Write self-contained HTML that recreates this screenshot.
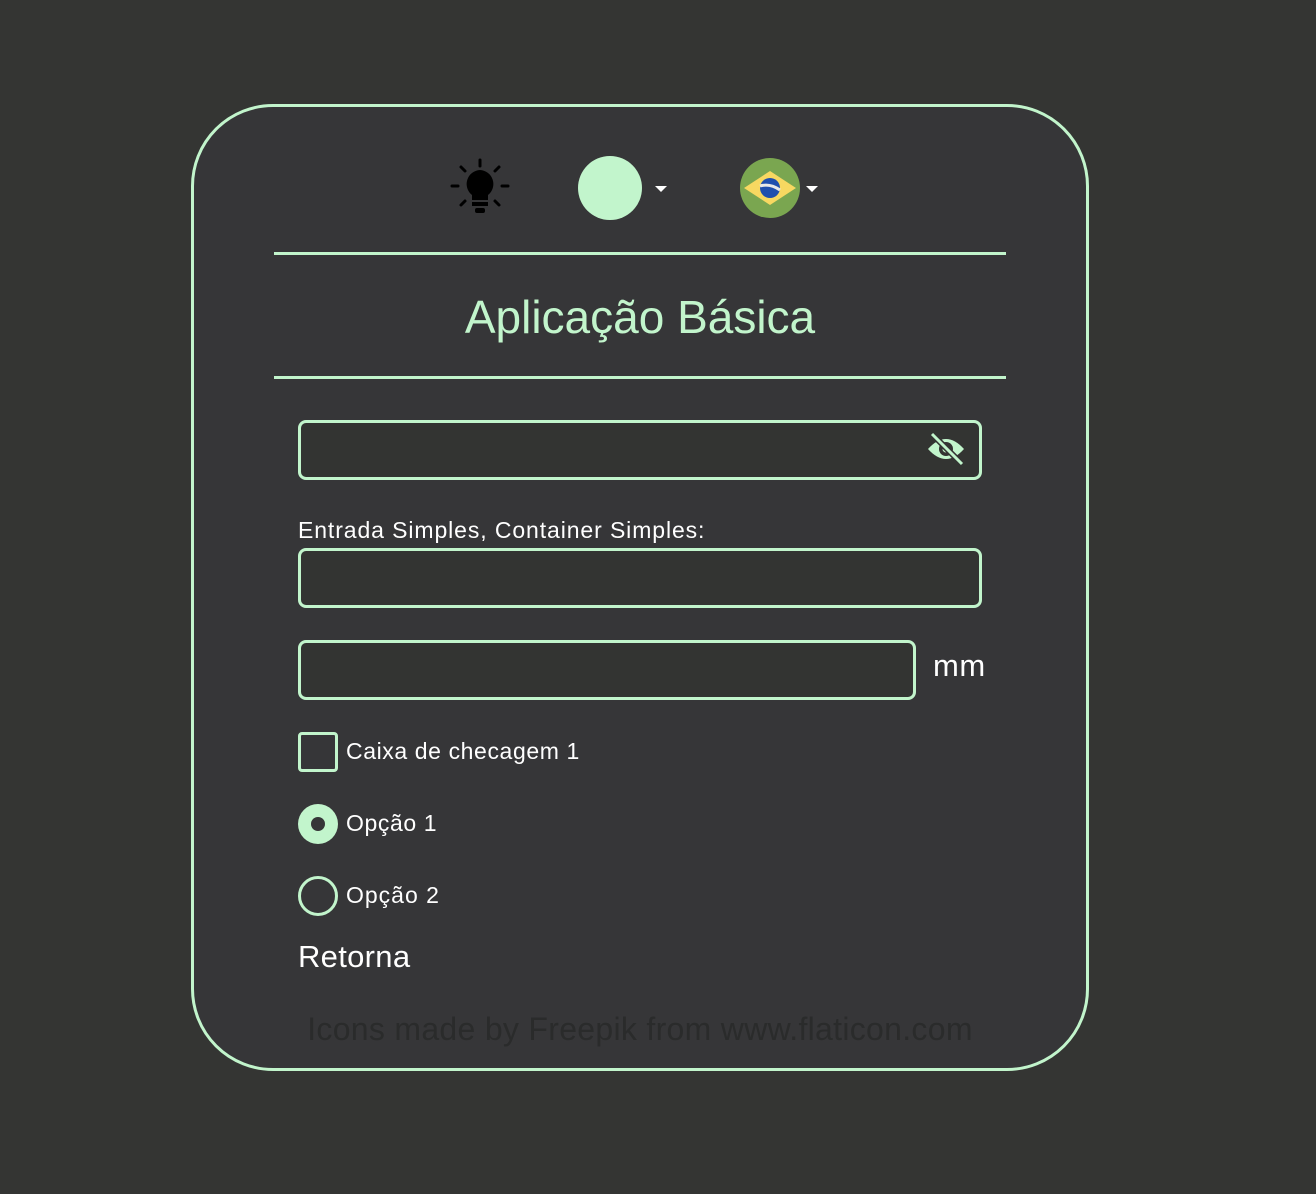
<!DOCTYPE html><html><head><style>
body{margin:0;width:1316px;height:1194px;background:#343533;font-family:"Liberation Sans",sans-serif;position:relative;overflow:hidden}
.a{position:absolute}
.card{left:191px;top:104px;width:892px;height:961px;border:3px solid #c2f5cc;border-radius:82px;background:#363638}
.line{left:274px;width:732px;height:3px;background:#c2f5cc}
.inp{border:3px solid #c2f5cc;border-radius:8px;background:#333432;box-sizing:border-box}
.t{color:#fff;font-size:23px;letter-spacing:0.6px}
</style></head><body>
<div class="a card"></div>
<svg class="a" style="left:450px;top:158px" width="60" height="60" viewBox="0 0 60 60">
<g stroke="#000" stroke-width="3" stroke-linecap="round"><line x1="30" y1="2" x2="30" y2="8"/><line x1="2" y1="28" x2="8" y2="28"/><line x1="52" y1="28" x2="58" y2="28"/><line x1="11" y1="9" x2="15" y2="13"/><line x1="49" y1="9" x2="45" y2="13"/><line x1="11" y1="47" x2="15" y2="43"/><line x1="49" y1="47" x2="45" y2="43"/></g>
<path d="M30 12a14 14 0 0 0-8 25v5h16v-5a14 14 0 0 0-8-25z" fill="#000"/><rect x="22" y="44" width="16" height="4" fill="#000"/><rect x="25" y="50" width="10" height="5" rx="2" fill="#000"/></svg>
<div class="a" style="left:578px;top:156px;width:64px;height:64px;border-radius:50%;background:#c2f5cc"></div>
<div class="a" style="left:655px;top:186px;border:6px solid transparent;border-top:6px solid #fff;border-bottom:0"></div>
<svg class="a" style="left:740px;top:158px" width="60" height="60"><circle cx="30" cy="30" r="30" fill="#7aa650"/><path d="M4 30L30 13 56 30 30 47z" fill="#f7d861"/><circle cx="30" cy="30" r="10" fill="#1f4fae"/><path d="M20 28q10-3 20 4" stroke="#e8e8e8" stroke-width="3" fill="none"/></svg>
<div class="a" style="left:806px;top:186px;border:6px solid transparent;border-top:6px solid #fff;border-bottom:0"></div>
<div class="a line" style="top:252px"></div>
<div class="a" style="left:0;width:1280px;top:290px;text-align:center;color:#c2f5cc;font-size:46px">Aplicação Básica</div>
<div class="a line" style="top:376px"></div>
<div class="a inp" style="left:298px;top:420px;width:684px;height:60px"></div>
<svg class="a" style="left:926px;top:432px" width="40" height="36" viewBox="0 0 40 36"><path d="M2 17q18-20 36 0q-18 20-36 0z" fill="#c2f5cc"/><circle cx="20" cy="17" r="7" fill="#333432"/><circle cx="20" cy="17" r="3.5" fill="#c2f5cc"/><line x1="6" y1="2" x2="36" y2="32" stroke="#333432" stroke-width="6"/><line x1="6" y1="2" x2="36" y2="32" stroke="#c2f5cc" stroke-width="3"/></svg>
<div class="a t" style="left:298px;top:517px;letter-spacing:0.9px">Entrada Simples, Container Simples:</div>
<div class="a inp" style="left:298px;top:548px;width:684px;height:60px"></div>
<div class="a inp" style="left:298px;top:640px;width:618px;height:60px"></div>
<div class="a t" style="left:933px;top:648px;font-size:31px;letter-spacing:0.5px">mm</div>
<div class="a" style="left:298px;top:732px;width:34px;height:34px;border:3px solid #c2f5cc;border-radius:4px"></div>
<div class="a t" style="left:346px;top:738px">Caixa de checagem 1</div>
<div class="a" style="left:298px;top:804px;width:40px;height:40px;border-radius:50%;background:#c2f5cc"></div>
<div class="a" style="left:311px;top:817px;width:14px;height:14px;border-radius:50%;background:#363638"></div>
<div class="a t" style="left:346px;top:810px">Opção 1</div>
<div class="a" style="left:298px;top:876px;width:34px;height:34px;border-radius:50%;border:3px solid #c2f5cc"></div>
<div class="a t" style="left:346px;top:882px;letter-spacing:1px">Opção 2</div>
<div class="a t" style="left:298px;top:939px;font-size:31px;letter-spacing:0.3px">Retorna</div>
<div class="a" style="left:0;width:1280px;top:1011px;text-align:center;color:#2a2b2b;font-size:32px;letter-spacing:0.3px">Icons made by Freepik from www.flaticon.com</div>
</body></html>
